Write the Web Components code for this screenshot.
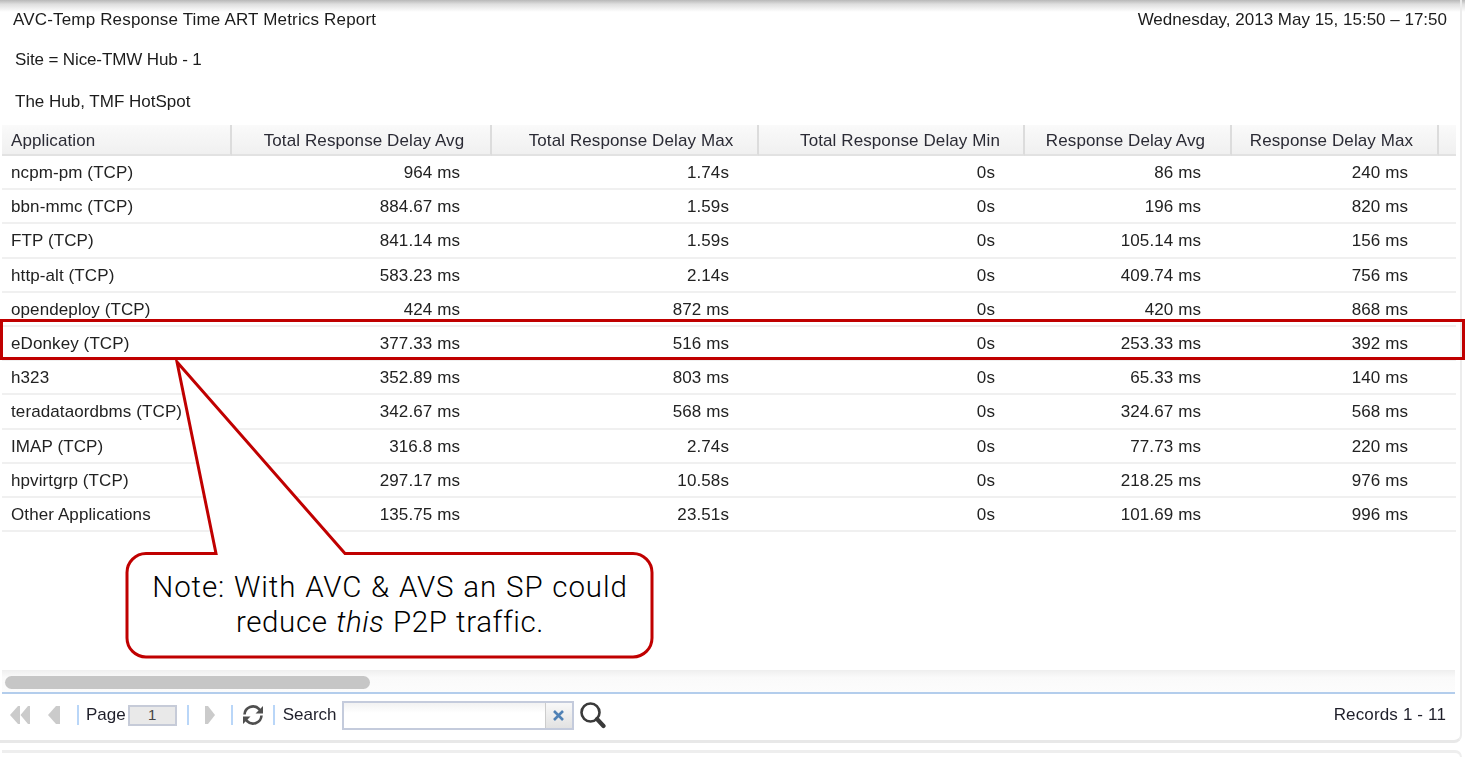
<!DOCTYPE html>
<html lang="en">
<head>
<meta charset="utf-8">
<title>AVC-Temp Response Time ART Metrics Report</title>
<style>
html,body{margin:0;padding:0;background:#fff}
body{width:1465px;height:758px;overflow:hidden;font-family:"Liberation Sans",Arial,sans-serif;color:#222}
</style>
</head>
<body>
<report-page>
  <report-header slot="header"
    report-title="AVC-Temp Response Time ART Metrics Report"
    range="Wednesday, 2013 May 15, 15:50 – 17:50"
    site="Site = Nice-TMW Hub - 1"
    location="The Hub, TMF HotSpot"></report-header>
  <metrics-table slot="table"></metrics-table>
  <note-callout slot="overlay">Note: With AVC &amp; AVS an SP could<br><span style="letter-spacing:.6px">reduce <i>this</i> P2P traffic.</span></note-callout>
  <h-scrollbar slot="scroll"></h-scrollbar>
  <grid-pager slot="pager"></grid-pager>
</report-page>

<script>
function define(name, html, setup){
  customElements.define(name, class extends HTMLElement{
    constructor(){super();this.attachShadow({mode:'open'}).innerHTML=html;}
    connectedCallback(){if(setup)setup(this);}
  });
}

define('report-page',`<style>
:host{display:block;position:relative;width:1465px;height:758px;overflow:hidden;background:#fff}
.top{height:12px;background:linear-gradient(#b8b8b8,#dedede 35%,#fff)}
.panel{display:flex;flex-direction:column;width:1462px;height:743px;margin-top:-12px;padding:0 5px 0 2px;box-sizing:border-box;
  border-right:2px solid #ececec;border-bottom:3px solid #e8e8e8;border-bottom-right-radius:8px}
.grow{flex:1}
.next{height:7px;margin:7px 0 0 2px;width:1460px;box-sizing:border-box;border-top:3px solid #eeeeee;border-right:2px solid #eeeeee;border-top-right-radius:8px}
</style>
<div class="top"></div>
<div class="panel">
  <slot name="header"></slot>
  <slot name="table"></slot>
  <div class="grow"></div>
  <slot name="scroll"></slot>
  <slot name="pager"></slot>
</div>
<div class="next"></div>
<slot name="overlay"></slot>`);

define('report-header',`<style>
:host{display:block;font-size:17px;letter-spacing:.1px;line-height:20px;color:#1c1c1c;padding-top:10px;height:125px;box-sizing:border-box;filter:blur(.35px)}
.a{display:flex;justify-content:space-between;padding:0 8px 0 11px;height:40px}
#t{letter-spacing:.17px}
#r{letter-spacing:0}
.b{padding-left:13px;height:42px}
#s{letter-spacing:-.12px}
#l{letter-spacing:0}
</style>
<div class="a"><span id="t"></span><span id="r"></span></div>
<div class="b" id="s"></div>
<div class="b" id="l"></div>`,el=>{
  const s=el.shadowRoot;
  s.getElementById('t').textContent=el.getAttribute('report-title');
  s.getElementById('r').textContent=el.getAttribute('range');
  s.getElementById('s').textContent=el.getAttribute('site');
  s.getElementById('l').textContent=el.getAttribute('location');
});

define('metrics-table',`<style>
:host{display:block;font-size:17px;letter-spacing:.1px;color:#222;filter:blur(.35px)}
.g{display:grid;grid-template-columns:230px 260px 267px 266px 207px 207px 17px;width:1454px}
.h{height:31px;line-height:31px;box-sizing:border-box;text-align:center;color:#2b2b35;
   background:linear-gradient(#fafafa,#f0f0f0);border-right:2px solid #dcdcdc;border-bottom:2px solid #e2e2e2;white-space:nowrap}
.h0{text-align:left;padding-left:9px}
.h1{padding-left:6px}
.h2{padding-left:13px}
.h3{padding-left:18px}
.h4{padding-right:4px}
.h5{padding-right:6px}
.h6{border-right:0}
.c{height:34.2px;line-height:33.6px;box-sizing:border-box;text-align:right;border-bottom:2px solid #f0f0f0;white-space:nowrap}
.c.n{text-align:left;padding:0 0 0 9px}
.c.p1{padding-right:32px}
.c.p2{padding-right:30px}
.c.p3{padding-right:30px}
.c.p4{padding-right:31px}
.c.p5{padding-right:31px}
</style><div class="g" id="g"></div>`,el=>{
  const heads=['Application','Total Response Delay Avg','Total Response Delay Max','Total Response Delay Min','Response Delay Avg','Response Delay Max',''];
  const rows=[
   ['ncpm-pm (TCP)','964 ms','1.74s','0s','86 ms','240 ms'],
   ['bbn-mmc (TCP)','884.67 ms','1.59s','0s','196 ms','820 ms'],
   ['FTP (TCP)','841.14 ms','1.59s','0s','105.14 ms','156 ms'],
   ['http-alt (TCP)','583.23 ms','2.14s','0s','409.74 ms','756 ms'],
   ['opendeploy (TCP)','424 ms','872 ms','0s','420 ms','868 ms'],
   ['eDonkey (TCP)','377.33 ms','516 ms','0s','253.33 ms','392 ms'],
   ['h323','352.89 ms','803 ms','0s','65.33 ms','140 ms'],
   ['teradataordbms (TCP)','342.67 ms','568 ms','0s','324.67 ms','568 ms'],
   ['IMAP (TCP)','316.8 ms','2.74s','0s','77.73 ms','220 ms'],
   ['hpvirtgrp (TCP)','297.17 ms','10.58s','0s','218.25 ms','976 ms'],
   ['Other Applications','135.75 ms','23.51s','0s','101.69 ms','996 ms']];
  const g=el.shadowRoot.getElementById('g');
  const add=(cls,t)=>{const d=document.createElement('div');d.className=cls;d.textContent=t;g.appendChild(d);};
  heads.forEach((t,i)=>add('h h'+i,t));
  rows.forEach(r=>{r.forEach((t,i)=>add(i?'c p'+i:'c n',t));add('c e','');});
});

define('note-callout',`<style>
:host{display:block;position:absolute;left:0;top:0;width:1465px;height:758px;pointer-events:none}
svg{position:absolute;left:0;top:0}
.t{position:absolute;left:128px;top:570px;width:524px;text-align:center;font:300 29.5px/35px Roboto,"Liberation Sans",sans-serif;color:#000;letter-spacing:.88px;word-spacing:.8px}
</style>
<svg width="1465" height="758" viewBox="0 0 1465 758" fill="none" stroke="#c00000" stroke-width="3">
  <rect x="1.5" y="320.5" width="1462" height="38"/>
  <path fill="#fff" d="M146 553.5H216L177 362L345 553.5H633a19 19 0 0 1 19 19V638a19 19 0 0 1-19 19H146a19 19 0 0 1-19-19V572.5a19 19 0 0 1 19-19Z"/>
</svg>
<div class="t"><slot></slot></div>`);

define('h-scrollbar',`<style>
:host{display:block;height:24px;box-sizing:border-box;padding-top:5px;padding-left:3px;
  background:linear-gradient(#f0f0f0,#fafafa 30%,#fcfcfc);border-bottom:2px solid #b3cdec;border-top:1px solid #efefef}
.th{width:365px;height:13px;border-radius:7px;background:#c6c6c6}
</style><div class="th"></div>`);

define('grid-pager',`<style>
:host{display:flex;align-items:center;height:46px;box-sizing:border-box;padding:0 9px 4px 7px;font-size:17px;letter-spacing:0;color:#1f1f2a;position:relative}
.txt{filter:blur(.35px)}
svg{display:block;flex:none}
.sep{width:2px;height:20px;background:#b9d6f8;flex:none}
.pg{width:49px;height:21px;margin:0 0 0 2px;box-sizing:border-box;background:#e9e9e9;border:2px solid #c6cbd8;text-align:center;line-height:16px;font-size:15px;color:#444}
.box{display:flex;width:232px;height:29px;box-sizing:border-box;border:2px solid #c4cbdc;margin-left:5px;background:linear-gradient(#f2f2f2,#fff 40%)}
.box i{flex:1}
.x{width:26px;background:linear-gradient(#f8f8f8,#e2e2e2);border-left:1px solid #ccc;display:flex;align-items:center;justify-content:center}
.rec{margin-left:auto;letter-spacing:.15px}
</style>
<svg width="22" height="20" viewBox="0 0 22 20" fill="#cbcbcb"><path d="M11 1v18H9L1 10 9 1zM21 1v18h-2L11.5 10 19 1z"/></svg>
<svg width="14" height="20" viewBox="0 0 14 20" fill="#cbcbcb" style="margin-left:16px"><path d="M13 1v18h-4L1 10 9 1z"/></svg>
<span class="sep" style="margin-left:16px"></span>
<span class="txt" style="margin-left:7px">Page</span>
<span class="pg">1</span>
<span class="sep" style="margin-left:10px"></span>
<svg width="12" height="20" viewBox="0 0 12 20" fill="#cbcbcb" style="margin-left:15px"><path d="M1 1v18h3l7-9-7-9z"/></svg>
<span class="sep" style="margin-left:15px"></span>
<svg width="22" height="22" viewBox="0 0 22 22" fill="none" stroke="#4f4f4f" stroke-width="2.6" style="margin-left:9px"><path d="M2.5 10.5a8.5 8.5 0 0 1 14.5-5.5l1.5 2"/><path d="M19.5 11.5a8.5 8.5 0 0 1-14.5 5.5l-1.5-2"/><path fill="#4f4f4f" stroke="none" d="M21 2v7.5h-7.5zM1 20v-7.5h7.5z"/></svg>
<span class="sep" style="margin-left:9px"></span>
<span class="txt" style="margin-left:8px">Search</span>
<span class="box"><i></i><span class="x"><svg width="13" height="13" viewBox="0 0 13 13" stroke="#4f81b5" stroke-width="2.6"><path d="M2 2l9 9M11 2l-9 9"/></svg></span></span>
<svg width="27" height="28" viewBox="0 0 27 28" fill="none" style="margin-left:5px"><circle cx="11.5" cy="11.5" r="9" stroke="#3a3a3a" stroke-width="2.6"/><path d="M18 18l6.5 7" stroke="#3a3a3a" stroke-width="4.2" stroke-linecap="round"/></svg>
<span class="txt rec">Records 1 - 11</span>`);
</script>
</body>
</html>
